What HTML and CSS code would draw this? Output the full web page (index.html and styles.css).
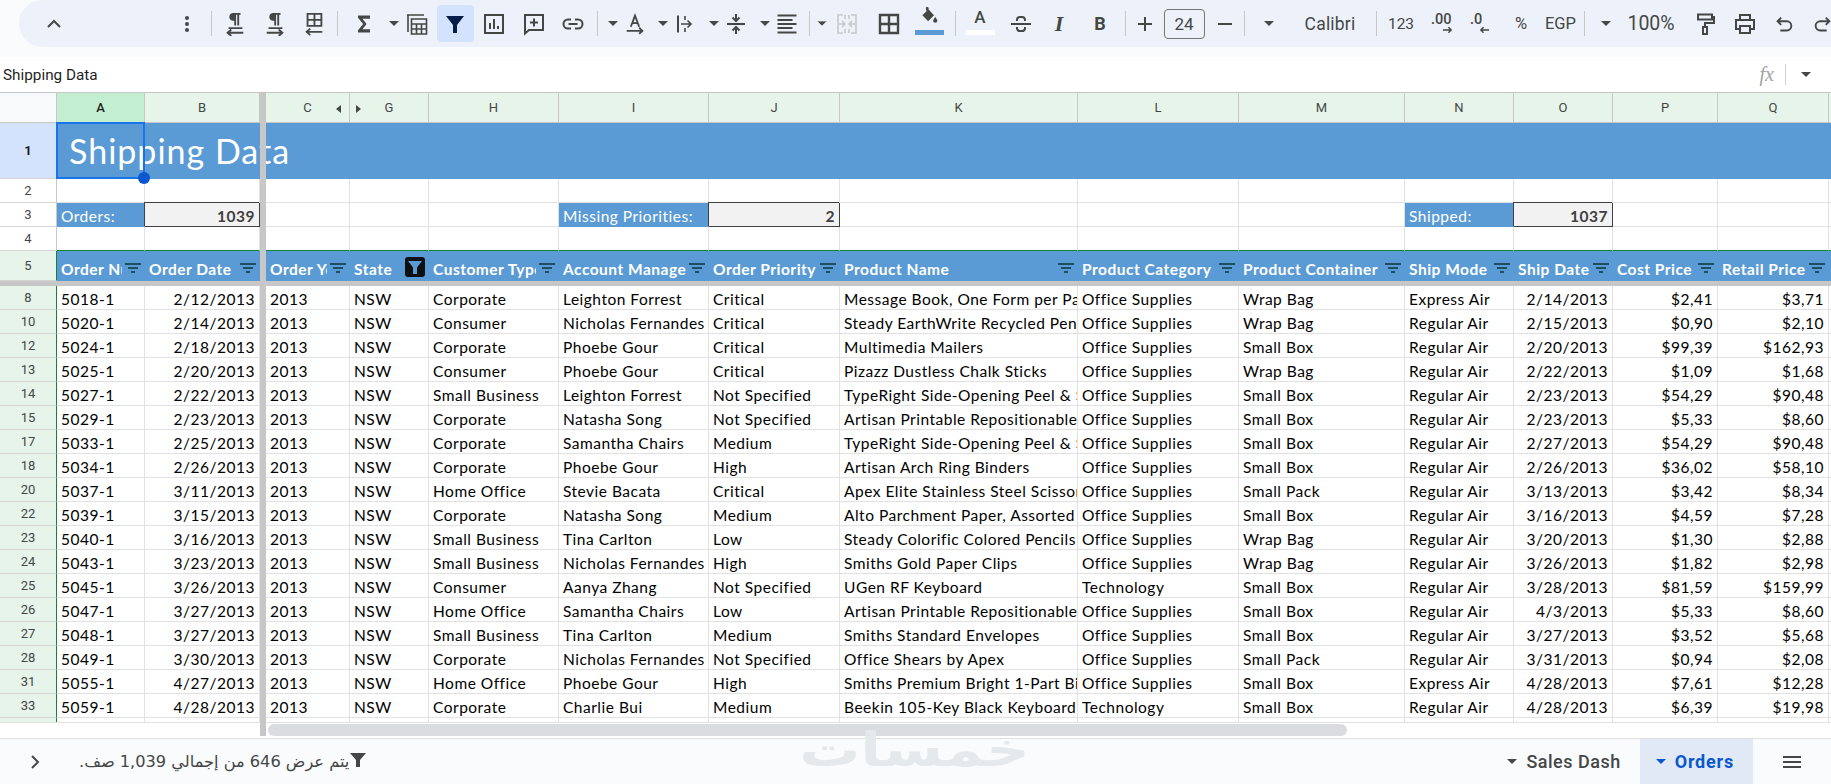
FILE: index.html
```html
<!DOCTYPE html>
<html lang="en">
<head>
<meta charset="utf-8">
<title>Shipping Data</title>
<link rel="stylesheet" href="styles.css">
</head>
<body>
<svg class="defs" aria-hidden="true">
  <symbol id="dd" viewBox="0 0 10 5"><path d="M0 0h10L5 5z"/></symbol>
  <symbol id="fl" viewBox="0 0 16 12"><path d="M0 0h16v2H0zM3 4h10v2H3zM6 8h4v2H6z"/></symbol>
</svg>
<div class="app">
  <div class="top">
    <div class="tools">
      <div class="t"><svg class="i" viewBox="0 0 24 24"><path class="s" d="M6 15l6-6 6 6"/></svg></div>
      <div class="t"><svg class="i" viewBox="0 0 24 24"><circle class="f" cx="12" cy="6" r="2"/><circle class="f" cx="12" cy="12" r="2"/><circle class="f" cx="12" cy="18" r="2"/></svg></div>
      <div class="t"><span class="sep"></span></div>
      <div class="t"><svg class="i" viewBox="0 -1 24 26"><path class="f" d="M9.500 0H18v2h-1.500v11.500h-2V2h-1.300v11.500h-2V8.500H9.500a4.300 4.300 0 0 1 0-8.500zM5 15.500h15v2H5z"/><path class="s" d="M21 21.500H4m4-3.500-4 3.500 4 3.500"/></svg></div>
      <div class="t"><svg class="i" viewBox="0 -1 24 26"><path class="f" d="M9.500 0H18v2h-1.500v11.500h-2V2h-1.300v11.500h-2V8.500H9.500a4.300 4.300 0 0 1 0-8.500zM5 15.500h15v2H5z"/><path class="s" d="M3 21.500h17M16 18l4 3.500-4 3.500"/></svg></div>
      <div class="t"><svg class="i" viewBox="0 -1 24 26"><path class="s" d="M5 1h15v13H5zM12.500 1v13M5 7.500h15M21 20.500H4m4-3.500-4 3.500 4 3.500"/></svg></div>
      <div class="t"><span class="sep"></span></div>
      <div class="t"><svg class="i" viewBox="-2 -2 28 28"><path class="f" d="M5 2h14v3.800h-8.800L15 12l-4.800 6.200H19V22H5v-2.800L11 12 5 4.800z"/></svg></div>
      <div class="t"><svg class="dd"><use href="#dd"/></svg></div>
      <div class="t"><svg class="i" viewBox="0 0 24 24"><path class="s t15" d="M2 3h17M3 3v17"/><path class="s t15" d="M6.500 7h15v15h-15zM6.500 12h15M6.500 17h15M11.500 12v10M16.500 12v10"/></svg></div>
      <div class="t"><span class="on"><svg class="i" viewBox="0 0 24 24"><path class="navy" d="M3 4h18l-7 9v8h-4v-8z"/></svg></span></div>
      <div class="t"><svg class="i" viewBox="0 0 24 24"><path class="s" d="M3 3h18v18H3zM8 11v6M12 7v10M16 14v3"/></svg></div>
      <div class="t"><svg class="i" viewBox="0 0 24 24"><path class="s" d="M3 3h18v15H7l-4 3.500zM12 6.500v8M8 10.500h8"/></svg></div>
      <div class="t"><svg class="i" viewBox="0 0 24 24"><path class="s" d="M10 7.500H7a4.500 4.500 0 0 0 0 9h3M14 7.500h3a4.500 4.500 0 0 1 0 9h-3M7.500 12h9"/></svg></div>
      <div class="t"><span class="sep"></span></div>
      <div class="t"><svg class="dd"><use href="#dd"/></svg></div>
      <div class="t"><svg class="i" viewBox="0 -1 24 26"><path class="s" d="M7.500 15 12 3l4.500 12M9 11h6M3 19.500h17m-3.500-3.500 3.500 3.500-3.500 3"/></svg></div>
      <div class="t"><svg class="dd"><use href="#dd"/></svg></div>
      <div class="t"><svg class="i" viewBox="0 0 24 24"><path class="s" d="M5 3.500v17"/><path class="s t15" d="M12 4v4M12 16v4M8 12h10M14.500 8.500 18 12l-3.500 3.500"/></svg></div>
      <div class="t"><svg class="dd"><use href="#dd"/></svg></div>
      <div class="t"><svg class="i" viewBox="0 0 24 24"><path class="s" d="M3 12h18M12 2v7M8.500 5.500 12 9l3.500-3.500M12 22v-7M8.500 18.500 12 15l3.500 3.500"/></svg></div>
      <div class="t"><svg class="dd"><use href="#dd"/></svg></div>
      <div class="t"><svg class="i" viewBox="0 0 24 24"><path class="s" d="M2.500 3.500h19M2.500 8h15M2.500 12h19M2.500 16h15M2.500 20.500h19"/></svg></div>
      <div class="t"><span class="sep"></span></div>
      <div class="t"><svg class="dd off"><use href="#dd"/></svg></div>
      <div class="t"><svg class="i" viewBox="0 0 24 24"><path class="s off" d="M8 3H3v18h5M16 3h5v18h-5M10 3v4M14 3v4M10 17v4M14 17v4M3 12h7m-3-3 3 3-3 3M21 12h-7m3-3-3 3 3 3"/></svg></div>
      <div class="t"><svg class="i" viewBox="0 0 24 24"><path class="s b2" d="M3 3h18v18H3zM12 3v18M3 12h18"/></svg></div>
      <div class="t"><div class="stack"><svg class="i18" viewBox="0 0 24 24"><path class="f" d="M8 1l2-1.500 2 2-1 1L18 10l-7 7-7-7 5-5zM19.500 12s2.500 3 2.500 4.500a2.500 2.500 0 0 1-5 0C17 15 19.500 12 19.500 12z"/></svg><span class="swatch blue"></span></div></div>
      <div class="t"><span class="sep"></span></div>
      <div class="t"><div class="stack"><span class="la">A</span><span class="swatch white"></span></div></div>
      <div class="t"><svg class="i" viewBox="0 0 24 24"><path class="s" d="M2 12h20M16 9V7.500A3 3 0 0 0 13 5h-2a3 3 0 0 0-3 2.500V9M8 15v1.500a3 3 0 0 0 3 2.500h2a3 3 0 0 0 3-2.500V15"/></svg></div>
      <div class="t"><span class="li">I</span></div>
      <div class="t"><span class="lb">B</span></div>
      <div class="t"><span class="sep"></span></div>
      <div class="t"><svg class="i" viewBox="0 0 24 24"><path class="s" d="M12 5v14M5 12h14"/></svg></div>
      <div class="t"><span class="size">24</span></div>
      <div class="t"><svg class="i" viewBox="0 0 24 24"><path class="s" d="M5 12h14"/></svg></div>
      <div class="t"><span class="sep"></span></div>
      <div class="t"><svg class="dd"><use href="#dd"/></svg></div>
      <div class="t"><span class="lbl font">Calibri</span></div>
      <div class="t"><span class="sep"></span></div>
      <div class="t"><span class="lbl n123">123</span></div>
      <div class="t"><div class="dec"><span>.00</span><svg class="ar" viewBox="0 0 12 8"><path class="s" d="M1 4h9M7 1l3 3-3 3"/></svg></div></div>
      <div class="t"><div class="dec"><span>.0</span><svg class="ar shift" viewBox="0 0 12 8"><path class="s" d="M11 4H2M5 1 2 4l3 3"/></svg></div></div>
      <div class="t"><span class="lbl pct">%</span></div>
      <div class="t"><span class="lbl egp">EGP</span></div>
      <div class="t"><span class="sep"></span></div>
      <div class="t"><svg class="dd"><use href="#dd"/></svg></div>
      <div class="t"><span class="lbl zoom">100%</span></div>
      <div class="t"><svg class="i" viewBox="0 0 24 24"><path class="s" d="M5 2.500h14v5H5zM19 5h2v6h-9v4M10 15h4v7h-4z"/></svg></div>
      <div class="t"><svg class="i" viewBox="0 0 24 24"><path class="s" d="M7 8V3h10v5M7 17H3V8h18v9h-4M7 14h10v7H7z"/></svg></div>
      <div class="t"><svg class="i" viewBox="-1 -1 26 26"><path class="s" d="M9 5 5 9l4 4M5 9h10a4.500 4.500 0 0 1 0 10H8"/></svg></div>
      <div class="t"><svg class="i" viewBox="-1 -1 26 26"><path class="s" d="m15 5 4 4-4 4M19 9H9a4.500 4.500 0 0 0 0 10h7"/></svg></div>
    </div>
  </div>
  <div class="formula">
    <span class="ftext">Shipping Data</span>
    <span class="fx">fx</span>
    <span class="fsep"></span>
    <svg class="dd"><use href="#dd"/></svg>
  </div>
  <div class="main">
    <div class="sheet">
      <table class="grid">
        <colgroup>
          <col class="c-rh"><col class="c-a"><col class="c-b"><col class="c-bar"><col class="c-c"><col class="c-g"><col class="c-h"><col class="c-i"><col class="c-j"><col class="c-k"><col class="c-l"><col class="c-m"><col class="c-n"><col class="c-o"><col class="c-p"><col class="c-q"><col class="c-r">
        </colgroup>
        <tr class="rcol">
          <th class="corner"></th><th class="sel">A</th><th>B</th><th class="b"></th><th class="hasarrow">C<i class="tri-l"></i></th><th class="hasarrow">G<i class="tri-r"></i></th><th>H</th><th>I</th><th>J</th><th>K</th><th>L</th><th>M</th><th>N</th><th>O</th><th>P</th><th>Q</th><th></th>
        </tr>
        <tr class="r1"><th class="rh cur">1</th><td colspan="16" class="title">Shipping Data</td></tr>
        <tr class="rr"><th class="rh w">2</th><td></td><td></td><td class="b"></td><td></td><td></td><td></td><td></td><td></td><td></td><td></td><td></td><td></td><td></td><td></td><td></td><td></td></tr>
        <tr class="rr"><th class="rh w">3</th><td class="lab">Orders:</td><td class="val r">1039</td><td class="b"></td><td></td><td></td><td></td><td class="lab">Missing Priorities:</td><td class="val r">2</td><td></td><td></td><td></td><td class="lab">Shipped:</td><td class="val r">1037</td><td></td><td></td><td></td></tr>
        <tr class="rr r4"><th class="rh w">4</th><td></td><td></td><td class="b"></td><td></td><td></td><td></td><td></td><td></td><td></td><td></td><td></td><td></td><td></td><td></td><td></td><td></td></tr>
        <tr class="r5"><th class="rh">5</th>
          <td><div class="hd"><span>Order Number</span><svg class="flt"><use href="#fl"/></svg></div></td>
          <td><div class="hd"><span>Order Date</span><svg class="flt"><use href="#fl"/></svg></div></td>
          <td class="b"></td>
          <td><div class="hd"><span>Order Year</span><svg class="flt"><use href="#fl"/></svg></div></td>
          <td><div class="hd"><span>State</span><svg class="act" viewBox="0 0 20 20"><rect width="20" height="20" rx="3" fill="#0d0f10"/><path d="M3 4h14l-5 6.500V17H8v-6.500z" fill="#5b9bd5"/></svg></div></td>
          <td><div class="hd"><span>Customer Type</span><svg class="flt"><use href="#fl"/></svg></div></td>
          <td><div class="hd"><span>Account Manager</span><svg class="flt"><use href="#fl"/></svg></div></td>
          <td><div class="hd"><span>Order Priority</span><svg class="flt"><use href="#fl"/></svg></div></td>
          <td><div class="hd"><span>Product Name</span><svg class="flt"><use href="#fl"/></svg></div></td>
          <td><div class="hd"><span>Product Category</span><svg class="flt"><use href="#fl"/></svg></div></td>
          <td><div class="hd"><span>Product Container</span><svg class="flt"><use href="#fl"/></svg></div></td>
          <td><div class="hd"><span>Ship Mode</span><svg class="flt"><use href="#fl"/></svg></div></td>
          <td><div class="hd"><span>Ship Date</span><svg class="flt"><use href="#fl"/></svg></div></td>
          <td><div class="hd"><span>Cost Price</span><svg class="flt"><use href="#fl"/></svg></div></td>
          <td><div class="hd"><span>Retail Price</span><svg class="flt"><use href="#fl"/></svg></div></td>
          <td></td>
        </tr>
        <tr class="hbar"><td colspan="17"></td></tr>
        <tr class="rd"><th class="rh">8</th><td>5018-1</td><td class="r">2/12/2013</td><td class="b"></td><td>2013</td><td>NSW</td><td>Corporate</td><td>Leighton Forrest</td><td>Critical</td><td>Message Book, One Form per Page</td><td>Office Supplies</td><td>Wrap Bag</td><td>Express Air</td><td class="r">2/14/2013</td><td class="r">$2,41</td><td class="r">$3,71</td><td></td></tr>
        <tr class="rd"><th class="rh">10</th><td>5020-1</td><td class="r">2/14/2013</td><td class="b"></td><td>2013</td><td>NSW</td><td>Consumer</td><td>Nicholas Fernandes</td><td>Critical</td><td>Steady EarthWrite Recycled Pencils</td><td>Office Supplies</td><td>Wrap Bag</td><td>Regular Air</td><td class="r">2/15/2013</td><td class="r">$0,90</td><td class="r">$2,10</td><td></td></tr>
        <tr class="rd"><th class="rh">12</th><td>5024-1</td><td class="r">2/18/2013</td><td class="b"></td><td>2013</td><td>NSW</td><td>Corporate</td><td>Phoebe Gour</td><td>Critical</td><td>Multimedia Mailers</td><td>Office Supplies</td><td>Small Box</td><td>Regular Air</td><td class="r">2/20/2013</td><td class="r">$99,39</td><td class="r">$162,93</td><td></td></tr>
        <tr class="rd"><th class="rh">13</th><td>5025-1</td><td class="r">2/20/2013</td><td class="b"></td><td>2013</td><td>NSW</td><td>Consumer</td><td>Phoebe Gour</td><td>Critical</td><td>Pizazz Dustless Chalk Sticks</td><td>Office Supplies</td><td>Wrap Bag</td><td>Regular Air</td><td class="r">2/22/2013</td><td class="r">$1,09</td><td class="r">$1,68</td><td></td></tr>
        <tr class="rd"><th class="rh">14</th><td>5027-1</td><td class="r">2/22/2013</td><td class="b"></td><td>2013</td><td>NSW</td><td>Small Business</td><td>Leighton Forrest</td><td>Not Specified</td><td>TypeRight Side-Opening Peel &amp; Seal</td><td>Office Supplies</td><td>Small Box</td><td>Regular Air</td><td class="r">2/23/2013</td><td class="r">$54,29</td><td class="r">$90,48</td><td></td></tr>
        <tr class="rd"><th class="rh">15</th><td>5029-1</td><td class="r">2/23/2013</td><td class="b"></td><td>2013</td><td>NSW</td><td>Corporate</td><td>Natasha Song</td><td>Not Specified</td><td>Artisan Printable Repositionable Notes</td><td>Office Supplies</td><td>Small Box</td><td>Regular Air</td><td class="r">2/23/2013</td><td class="r">$5,33</td><td class="r">$8,60</td><td></td></tr>
        <tr class="rd"><th class="rh">17</th><td>5033-1</td><td class="r">2/25/2013</td><td class="b"></td><td>2013</td><td>NSW</td><td>Corporate</td><td>Samantha Chairs</td><td>Medium</td><td>TypeRight Side-Opening Peel &amp; Seal</td><td>Office Supplies</td><td>Small Box</td><td>Regular Air</td><td class="r">2/27/2013</td><td class="r">$54,29</td><td class="r">$90,48</td><td></td></tr>
        <tr class="rd"><th class="rh">18</th><td>5034-1</td><td class="r">2/26/2013</td><td class="b"></td><td>2013</td><td>NSW</td><td>Corporate</td><td>Phoebe Gour</td><td>High</td><td>Artisan Arch Ring Binders</td><td>Office Supplies</td><td>Small Box</td><td>Regular Air</td><td class="r">2/26/2013</td><td class="r">$36,02</td><td class="r">$58,10</td><td></td></tr>
        <tr class="rd"><th class="rh">20</th><td>5037-1</td><td class="r">3/11/2013</td><td class="b"></td><td>2013</td><td>NSW</td><td>Home Office</td><td>Stevie Bacata</td><td>Critical</td><td>Apex Elite Stainless Steel Scissors</td><td>Office Supplies</td><td>Small Pack</td><td>Regular Air</td><td class="r">3/13/2013</td><td class="r">$3,42</td><td class="r">$8,34</td><td></td></tr>
        <tr class="rd"><th class="rh">22</th><td>5039-1</td><td class="r">3/15/2013</td><td class="b"></td><td>2013</td><td>NSW</td><td>Corporate</td><td>Natasha Song</td><td>Medium</td><td>Alto Parchment Paper, Assorted</td><td>Office Supplies</td><td>Small Box</td><td>Regular Air</td><td class="r">3/16/2013</td><td class="r">$4,59</td><td class="r">$7,28</td><td></td></tr>
        <tr class="rd"><th class="rh">23</th><td>5040-1</td><td class="r">3/16/2013</td><td class="b"></td><td>2013</td><td>NSW</td><td>Small Business</td><td>Tina Carlton</td><td>Low</td><td>Steady Colorific Colored Pencils</td><td>Office Supplies</td><td>Wrap Bag</td><td>Regular Air</td><td class="r">3/20/2013</td><td class="r">$1,30</td><td class="r">$2,88</td><td></td></tr>
        <tr class="rd"><th class="rh">24</th><td>5043-1</td><td class="r">3/23/2013</td><td class="b"></td><td>2013</td><td>NSW</td><td>Small Business</td><td>Nicholas Fernandes</td><td>High</td><td>Smiths Gold Paper Clips</td><td>Office Supplies</td><td>Wrap Bag</td><td>Regular Air</td><td class="r">3/26/2013</td><td class="r">$1,82</td><td class="r">$2,98</td><td></td></tr>
        <tr class="rd"><th class="rh">25</th><td>5045-1</td><td class="r">3/26/2013</td><td class="b"></td><td>2013</td><td>NSW</td><td>Consumer</td><td>Aanya Zhang</td><td>Not Specified</td><td>UGen RF Keyboard</td><td>Technology</td><td>Small Box</td><td>Regular Air</td><td class="r">3/28/2013</td><td class="r">$81,59</td><td class="r">$159,99</td><td></td></tr>
        <tr class="rd"><th class="rh">26</th><td>5047-1</td><td class="r">3/27/2013</td><td class="b"></td><td>2013</td><td>NSW</td><td>Home Office</td><td>Samantha Chairs</td><td>Low</td><td>Artisan Printable Repositionable Notes</td><td>Office Supplies</td><td>Small Box</td><td>Regular Air</td><td class="r">4/3/2013</td><td class="r">$5,33</td><td class="r">$8,60</td><td></td></tr>
        <tr class="rd"><th class="rh">27</th><td>5048-1</td><td class="r">3/27/2013</td><td class="b"></td><td>2013</td><td>NSW</td><td>Small Business</td><td>Tina Carlton</td><td>Medium</td><td>Smiths Standard Envelopes</td><td>Office Supplies</td><td>Small Box</td><td>Regular Air</td><td class="r">3/27/2013</td><td class="r">$3,52</td><td class="r">$5,68</td><td></td></tr>
        <tr class="rd"><th class="rh">28</th><td>5049-1</td><td class="r">3/30/2013</td><td class="b"></td><td>2013</td><td>NSW</td><td>Corporate</td><td>Nicholas Fernandes</td><td>Not Specified</td><td>Office Shears by Apex</td><td>Office Supplies</td><td>Small Pack</td><td>Regular Air</td><td class="r">3/31/2013</td><td class="r">$0,94</td><td class="r">$2,08</td><td></td></tr>
        <tr class="rd"><th class="rh">31</th><td>5055-1</td><td class="r">4/27/2013</td><td class="b"></td><td>2013</td><td>NSW</td><td>Home Office</td><td>Phoebe Gour</td><td>High</td><td>Smiths Premium Bright 1-Part Binders</td><td>Office Supplies</td><td>Small Box</td><td>Express Air</td><td class="r">4/28/2013</td><td class="r">$7,61</td><td class="r">$12,28</td><td></td></tr>
        <tr class="rd"><th class="rh">33</th><td>5059-1</td><td class="r">4/28/2013</td><td class="b"></td><td>2013</td><td>NSW</td><td>Corporate</td><td>Charlie Bui</td><td>Medium</td><td>Beekin 105-Key Black Keyboard</td><td>Technology</td><td>Small Box</td><td>Regular Air</td><td class="r">4/28/2013</td><td class="r">$6,39</td><td class="r">$19,98</td><td></td></tr>
        <tr class="rd"><th class="rh"></th><td></td><td></td><td class="b"></td><td></td><td></td><td></td><td></td><td></td><td></td><td></td><td></td><td></td><td></td><td></td><td></td><td></td></tr>
      </table>
    </div>
    <div class="hscroll"><div class="thumb"></div></div>
    <div class="vfreeze"></div>
    <div class="selbox"><span class="handle"></span></div>
  </div>
  <div class="bottom">
    <svg class="chev" viewBox="0 0 24 24"><path class="s" d="m9 6 6 6-6 6"/></svg>
    <span class="count" dir="rtl">يتم عرض 646 من إجمالي 1,039 صف.</span>
    <svg class="funnel" viewBox="0 0 16 16"><path d="M0 1h16l-6 7v7H6V8z"/></svg>
    <div class="spacer"></div>
    <div class="tab"><svg class="dd"><use href="#dd"/></svg><span>Sales Dash</span></div>
    <div class="tab active"><svg class="dd"><use href="#dd"/></svg><span>Orders</span></div>
    <div class="menu"><svg class="burger" viewBox="0 0 18 12"><path d="M0 0h18v2H0zM0 5h18v2H0zM0 10h18v2H0z"/></svg></div>
  </div>
  <div class="mark" dir="rtl">خمسات</div>
</div>
</body>
</html>
```
FILE: styles.css
```css
* { box-sizing: border-box; }
html, body { margin: 0; padding: 0; height: 100%; }
body { background: #f9fbfd; font-family: Roboto, sans-serif; color: #444746; overflow: hidden; }
.defs { display: none; }
.app { position: relative; display: flex; flex-direction: column; width: 1831px; height: 784px; overflow: hidden; }

/* toolbar */
.top { height: 57px; flex: none; padding: 0 0 10px 19px; overflow: hidden; }
.tools {
  display: grid; height: 47px; padding-left: 35px; background: #edf2fa;
  border-radius: 24px 0 0 24px; align-items: center;
  grid-template-columns: 133px 24px 24px 40px 38.5px 23.5px 27px 30px 23px 38px 39px 40px 39px 24.5px 15px 22.5px 27.5px 22.5px 28.5px 22.5px 28.5px 22.5px 22px 13px 25px 41.5px 40.5px 26px 25px 41px 38px 41px 25px 20px 39px 41px 19px 25px 61px 46px 25px 41px 39px 40px 39.5px 23.5px 22px 45px 54px 39.5px 39px 39.5px 20px;
}
.t { width: 0; display: flex; justify-content: center; align-items: center; }
.t > * { flex: none; }
.i { width: 24px; height: 24px; display: block; }
.i18 { width: 20px; height: 20px; display: block; }
.s { fill: none; stroke: #444746; stroke-width: 2; }
.t15 { stroke-width: 1.6; }
.b2 { stroke-width: 2.4; }
.off { stroke: #c7c9cb; fill: #c7c9cb; }
.s.off { fill: none; stroke-width: 1.6; }
.f { fill: #444746; }
.navy { fill: #041e49; }
.dd { width: 10px; height: 5px; fill: #444746; display: block; flex: none; }
.sep { width: 1px; height: 25px; background: #c7c7c7; }
.on { width: 37px; height: 37px; background: #d3e3fd; border-radius: 4px; display: flex; align-items: center; justify-content: center; }
.stack { display: flex; flex-direction: column; align-items: center; height: 28px; margin-top: -5px; justify-content: space-between; }
.swatch { width: 29px; height: 5px; display: block; flex: none; }
.swatch.blue { background: #5b9bd5; }
.swatch.white { background: #fff; }
.la { font-size: 17px; font-weight: 500; line-height: 20px; color: #444746; }
.li { font: italic 700 22px "Liberation Serif", serif; color: #444746; }
.lb { font-size: 18px; font-weight: 700; color: #444746; }
.size { width: 41px; height: 30px; border: 1px solid #747775; border-radius: 4px; font-size: 17px; display: flex; align-items: center; justify-content: center; }
.lbl { white-space: nowrap; color: #444746; }
.font { font-size: 17.5px; letter-spacing: .2px; }
.n123 { font-size: 15.5px; }
.pct { font-size: 16.5px; }
.egp { font-size: 16.5px; }
.zoom { font-size: 19.5px; }
.dec { display: flex; flex-direction: column; align-items: flex-start; font-size: 14.500px; font-weight: 500; line-height: 12px; width: 22px; }
.ar { width: 11px; height: 8px; margin-left: 11px; }
.ar.shift { margin-left: 9px; }
.ar .s { stroke-width: 1.600; }

/* formula bar */
.formula { height: 36px; flex: none; display: flex; align-items: center; background: #fff; border-bottom: 1px solid #c7c7c7; padding: 0 20px 0 3px; }
.ftext { font-size: 15.300px; color: #1f1f1f; flex: 1; }
.fx { font: italic 20px "Liberation Serif", serif; color: #a0a2a4; }
.fsep { width: 1px; height: 21px; background: #d0d2d4; margin: 0 15px 0 11px; }

/* grid */
.main { position: relative; flex: none; height: 646px; }
.sheet { height: 629px; overflow: hidden; background: #fff; }
.grid { border-collapse: separate; border-spacing: 0; table-layout: fixed; width: 1839px; font-family: Lato, sans-serif; font-size: 15.5px; letter-spacing: .5px; color: #000; }
.c-rh { width: 57px; } .c-a { width: 88px; } .c-b { width: 115px; } .c-bar { width: 6px; }
.c-c { width: 84px; } .c-g { width: 79px; } .c-h { width: 130px; } .c-i { width: 150px; }
.c-j { width: 131px; } .c-k { width: 238px; } .c-l { width: 161px; } .c-m { width: 166px; }
.c-n { width: 109px; } .c-o { width: 99px; } .c-p { width: 105px; } .c-q { width: 111px; } .c-r { width: 10px; }
td, th { padding: 0 4px; border-right: 1px solid #e1e1e1; border-bottom: 1px solid #e1e1e1; overflow: hidden; white-space: nowrap; }
td { vertical-align: bottom; line-height: 19px; }
td.b, th.b { padding: 0; border: 0; background: none; }
.r { text-align: right; }
.rcol th { height: 30px; background: #e6f4ea; border-right-color: #c7c7c7; border-bottom-color: #c7c7c7; font: 400 13px Roboto, sans-serif; letter-spacing: 0; color: #444746; position: relative; overflow: visible; }
.rcol th.corner { background: #f8f9fa; }
.rcol th.sel { background: #c4eed0; color: #1f1f1f; font-weight: 500; }
.hasarrow { padding: 0; }
.tri-l, .tri-r { position: absolute; top: 12px; width: 0; height: 0; border-top: 4px solid transparent; border-bottom: 4px solid transparent; }
.tri-l { right: 8px; border-right: 5px solid #444746; }
.tri-r { left: 6px; border-left: 5px solid #444746; }
.rh { font: 400 13px Roboto, sans-serif; letter-spacing: 0; color: #444746; background: #e6f4ea; border-right: 1px solid #188038; border-bottom-color: #d5d5d5; padding: 0; text-align: center; vertical-align: middle; }
.rh.w { background: #fff; border-right-color: #c7c7c7; }
.rh.cur { background: #d3e3fd; border-right-color: #c7c7c7; color: #1f1f1f; font-weight: 700; }
.r1 { height: 56px; }
.title { background: #5b9bd5; color: #fff; font-size: 34px; line-height: 52px; padding-left: 12px; border: 0; letter-spacing: 1px; vertical-align: middle; }
.rr td, .rr th { height: 24px; }
.r4 td { border-bottom-color: #188038; }
.lab { background: #5b9bd5; color: #fff; border-color: #5b9bd5; }
.val { background: #f2f2f2; color: #404040; font-weight: 700; border-right-color: #404040; border-bottom-color: #404040; box-shadow: -1px -1px 0 #404040; overflow: visible; position: relative; }
.r5 th, .r5 td { height: 30px; }
.r5 td { background: #5b9bd5; color: #fff; font-weight: 700; border: 0; padding: 0 4px; }
.r5 td.b { background: none; }
.hd { display: flex; align-items: center; height: 30px; }
.hd span { flex: 1; min-width: 0; overflow: hidden; padding-top: 7px; }
.flt { width: 16px; height: 12px; fill: #1c4f60; flex: none; margin-left: 3px; margin-top: 5px; }
.act { width: 20px; height: 20px; flex: none; margin-top: 2px; }
.hbar td { height: 5px; padding: 0; border: 0; background: #c7c7c7; line-height: 0; font-size: 0; }
.rd td, .rd th { height: 24px; }
.hscroll { height: 17px; background: #fff; border-top: 1px solid #e1e1e1; border-bottom: 1px solid #e1e1e1; padding: 1px 0 0 268px; }
.thumb { width: 1079px; height: 12px; background: #dadce0; border-radius: 6px; }
.vfreeze { position: absolute; left: 260px; top: 0; width: 6px; height: 643px; background: #c7c7c7; }
.selbox { position: absolute; left: 56px; top: 29px; width: 89px; height: 57px; border: 2px solid #1a73e8; }
.handle { position: absolute; right: -7px; bottom: -7px; width: 12px; height: 12px; border-radius: 50%; background: #0b57d0; }

/* bottom bar */
.bottom { flex: 1; display: flex; align-items: center; padding-left: 23px; }
.chev { width: 24px; height: 24px; flex: none; }
.chev .s { stroke-width: 2; }
.count { font: 16.2px "DejaVu Sans", sans-serif; color: #444746; margin-left: 32px; white-space: nowrap; }
.funnel { width: 16px; height: 16px; fill: #444746; margin-left: 1px; margin-top: -4px; }
.spacer { flex: 1; }
.tab { height: 45px; display: flex; align-items: center; gap: 9px; padding: 0 19px 0 16px; font-size: 18px; font-weight: 500; letter-spacing: .5px; }
.tab .dd { fill: #444746; }
.tab.active { background: #e1e9f7; color: #0b57d0; font-weight: 700; letter-spacing: .8px; }
.tab.active .dd { fill: #0b57d0; }
.menu { width: 78px; display: flex; justify-content: center; }
.burger { width: 18px; height: 12px; fill: #444746; }

.mark { position: absolute; left: 805px; top: 725px; width: 219px; height: 50px; color: #e6e9ec; font: 700 52px/50px "DejaVu Sans", sans-serif; text-align: center; white-space: nowrap; transform: scale(1.17, .9); }
```
